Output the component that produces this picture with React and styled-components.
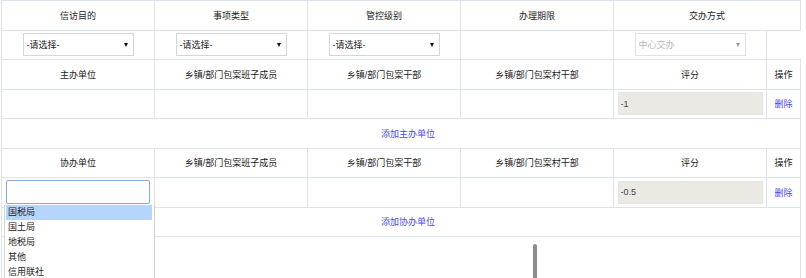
import React, { useState } from "react"
import styled, { createGlobalStyle, css } from "styled-components"

const GlobalStyle = createGlobalStyle`
  body {
    margin: 0;
    background: #fff;
    font-family: "Liberation Sans", "Noto Sans CJK SC", sans-serif;
    font-size: 9px;
    color: #222;
  }
`

const Page = styled.div`
  padding-left: 1px;
  width: 799px;
`

const Table = styled.table`
  width: 799px;
  border-collapse: collapse;
  table-layout: fixed;
`

const Row = styled.tr`
  height: 29.5px;
`

const Cell = styled.td`
  border: 1px solid #dce3eb;
  padding: 0;
  text-align: center;
  vertical-align: middle;
  position: relative;

  ${props =>
    props.open &&
    css`
      border-right-color: transparent;
    `}
`

const HeadCell = styled(Cell).attrs({ as: "th" })`
  font-weight: normal;
`

const SelectBox = styled.div`
  position: relative;
  display: inline-block;
  width: 111px;
  height: 23px;
  vertical-align: middle;
`

const NativeSelect = styled.select`
  appearance: none;
  width: 100%;
  height: 100%;
  margin: 0;
  padding: 0 0 0 3px;
  border: 1px solid #d3d7dc;
  border-radius: 0;
  background: #fff;
  font: inherit;
  color: ${props => (props.disabled ? "#9a9a9a" : "#222")};
  outline: none;
`

const Arrow = styled.span`
  position: absolute;
  right: 6px;
  top: 10px;
  border-left: 2.5px solid transparent;
  border-right: 2.5px solid transparent;
  border-top: 4px solid ${props => (props.muted ? "#9a9a9a" : "#111")};
  pointer-events: none;
`

const ScoreInput = styled.input`
  display: block;
  box-sizing: border-box;
  width: 145px;
  height: 23px;
  margin: 0 auto;
  padding: 0 0 0 2px;
  border: 1px solid #e6e4dd;
  background: #ebe9e3;
  font: inherit;
  color: #444;
`

const LinkText = styled.a`
  color: #4a49e8;
  text-decoration: none;
  cursor: pointer;
`

const AddCell = styled(Cell)`
  padding-left: 14px;
`

const Combo = styled.div`
  padding: 0 4px;
`

const ComboInput = styled.input`
  display: block;
  box-sizing: border-box;
  width: 144px;
  height: 24px;
  margin: 0;
  padding: 0 3px;
  border: 1px solid #86a9dc;
  border-radius: 2px;
  font: inherit;
  outline: none;
`

const ComboList = styled.ul`
  position: absolute;
  left: 2px;
  top: 27px;
  z-index: 2;
  width: 148px;
  margin: 0;
  padding: 0 0 0 1px;
  list-style: none;
  background: #fff;
  border-left: 1px solid #cfd3d8;
  border-right: 1px solid #cfd3d8;
  text-align: left;
`

const ComboItem = styled.li`
  height: 15px;
  line-height: 15px;
  padding-left: 2px;
  margin-right: 2px;
  color: #222;
  background: ${props => (props.active ? "#b5d5fd" : "transparent")};
`

const BottomCell = styled.td`
  border-left: 1px solid #dce3eb;
  border-right: 1px solid #dce3eb;
  height: 60px;
  padding: 0;
  vertical-align: top;
`

const Thumb = styled.div`
  width: 4px;
  height: 48px;
  margin: 7px 0 0 531px;
  border-radius: 2px 2px 0 0;
  background: #8c8c8c;
`

function Select({ value, disabled }) {
  return (
    <SelectBox>
      <NativeSelect disabled={disabled} defaultValue={value}>
        <option>{value}</option>
      </NativeSelect>
      <Arrow muted={disabled} />
    </SelectBox>
  )
}

const units = ["国税局", "国土局", "地税局", "其他", "信用联社", "工商局", "公安局"]

const cadreHeads = ["乡镇/部门包案班子成员", "乡镇/部门包案干部", "乡镇/部门包案村干部"]

function UnitHead({ title }) {
  return (
    <Row>
      <HeadCell>{title}</HeadCell>
      {cadreHeads.map(h => (
        <HeadCell key={h}>{h}</HeadCell>
      ))}
      <HeadCell>评分</HeadCell>
      <HeadCell>操作</HeadCell>
    </Row>
  )
}

export default function App() {
  const [active] = useState(0)

  return (
    <Page>
      <GlobalStyle />
      <Table>
        <colgroup>
          <col width="153" />
          <col width="153" />
          <col width="153" />
          <col width="153" />
          <col width="153" />
          <col width="34" />
        </colgroup>
        <tbody>
          <Row>
            <HeadCell>信访目的</HeadCell>
            <HeadCell>事项类型</HeadCell>
            <HeadCell>管控级别</HeadCell>
            <HeadCell>办理期限</HeadCell>
            <HeadCell colSpan={2}>交办方式</HeadCell>
          </Row>
          <Row>
            <Cell><Select value="-请选择-" /></Cell>
            <Cell><Select value="-请选择-" /></Cell>
            <Cell><Select value="-请选择-" /></Cell>
            <Cell />
            <Cell><Select value="中心交办" disabled /></Cell>
            <Cell open />
          </Row>

          <UnitHead title="主办单位" />
          <Row>
            <Cell />
            <Cell />
            <Cell />
            <Cell />
            <Cell><ScoreInput readOnly value="-1" /></Cell>
            <Cell><LinkText>删除</LinkText></Cell>
          </Row>
          <Row>
            <AddCell colSpan={6}><LinkText>添加主办单位</LinkText></AddCell>
          </Row>

          <UnitHead title="协办单位" />
          <Row>
            <Cell>
              <Combo>
                <ComboInput autoFocus defaultValue="" />
              </Combo>
              <ComboList>
                {units.map((u, i) => (
                  <ComboItem key={u} active={i === active}>{u}</ComboItem>
                ))}
              </ComboList>
            </Cell>
            <Cell />
            <Cell />
            <Cell />
            <Cell><ScoreInput readOnly value="-0.5" /></Cell>
            <Cell><LinkText>删除</LinkText></Cell>
          </Row>
          <Row>
            <AddCell colSpan={6}><LinkText>添加协办单位</LinkText></AddCell>
          </Row>
          <tr>
            <BottomCell colSpan={6}>
              <Thumb />
            </BottomCell>
          </tr>
        </tbody>
      </Table>
    </Page>
  )
}
